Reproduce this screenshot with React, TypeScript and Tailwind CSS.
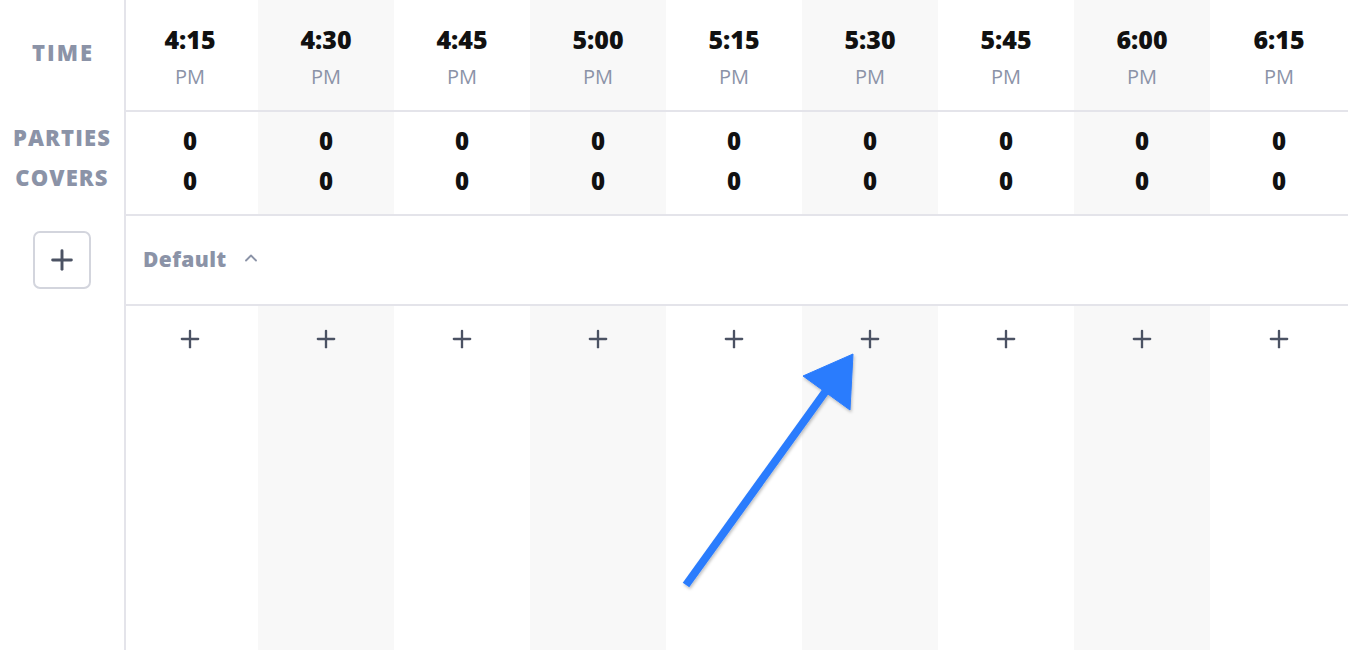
import { Plus, ChevronUp } from 'lucide-react'

const times = ['4:15', '4:30', '4:45', '5:00', '5:15', '5:30', '5:45', '6:00', '6:15']
const widths = ['w-[132px] pr-[4px]', 'w-[136px]', 'w-[136px]', 'w-[136px]', 'w-[136px]', 'w-[136px]', 'w-[136px]', 'w-[136px]', 'flex-1']

function Cols({ children, className = '' }: { children: (i: number) => React.ReactNode; className?: string }) {
  return (
    <div className={`flex ${className}`}>
      {times.map((_, i) => (
        <div key={i} className={`${widths[i]} shrink-0 ${i % 2 === 1 ? 'bg-[#f8f8f8]' : 'bg-white'} flex flex-col items-center`}>
          {children(i)}
        </div>
      ))}
    </div>
  )
}

export default function App() {
  return (
    <main className="relative w-[1348px] h-[650px] overflow-hidden bg-white flex" style={{ fontFamily: '"Open Sans", Lato, sans-serif' }}>
      <div className="w-[126px] shrink-0 border-r-2 border-[#e4e4ea] flex flex-col items-center">
        <div className="h-[112px] flex items-center pb-[8px] pl-[2px]">
          <span className="text-[22px] font-extrabold tracking-[0.09em] text-[#8b93a7]">TIME</span>
        </div>
        <div className="h-[104px] flex flex-col items-center pt-[11px] gap-[12px]">
          <span className="text-[22px] leading-[28px] font-extrabold tracking-[0.05em] text-[#8b93a7]">PARTIES</span>
          <span className="text-[22px] leading-[28px] font-extrabold tracking-[0.05em] text-[#8b93a7]">COVERS</span>
        </div>
        <button className="mt-[15px] w-[58px] h-[58px] rounded-[7px] border-2 border-[#d3d5dd] flex items-center justify-center text-[#4b5263]">
          <Plus size={32} strokeWidth={2.2} />
        </button>
      </div>

      <div className="flex-1 flex flex-col">
        <Cols className="h-[112px] border-b-2 border-[#e4e4ea]">
          {i => (
            <>
              <span className="mt-[22px] text-[25px] leading-[34px] font-extrabold text-[#111]">{times[i]}</span>
              <span className="mt-[8px] text-[20px] leading-[26px] text-[#8b93a7]">PM</span>
            </>
          )}
        </Cols>
        <Cols className="h-[104px] border-b-2 border-[#e4e4ea]">
          {() => (
            <>
              <span className="mt-[14px] text-[24px] leading-[30px] font-extrabold text-[#111]">0</span>
              <span className="mt-[10px] text-[24px] leading-[30px] font-extrabold text-[#111]">0</span>
            </>
          )}
        </Cols>
        <div className="h-[90px] border-b-2 border-[#e4e4ea] flex items-center pl-[17px] gap-[14px]">
          <span className="text-[21px] font-extrabold tracking-[0.02em] text-[#8b93a7]">Default</span>
          <ChevronUp size={20} strokeWidth={2.2} className="text-[#8b93a7] -mt-[4px]" />
        </div>
        <Cols className="flex-1">
          {() => <Plus size={28} strokeWidth={2} className="mt-[19px] text-[#4b5263]" />}
        </Cols>
      </div>

      <svg className="absolute left-0 top-0 pointer-events-none" width="1348" height="650" viewBox="0 0 1348 650">
        <defs>
          <filter id="sh" x="-20%" y="-20%" width="140%" height="140%">
            <feDropShadow dx="1" dy="2" stdDeviation="1.5" floodColor="#000" floodOpacity="0.25" />
          </filter>
        </defs>
        <g filter="url(#sh)" fill="#2b7cfd" stroke="#2b7cfd">
          <line x1="686" y1="585" x2="828" y2="388" strokeWidth="8" />
          <polygon points="853,354 803,376 850,410" strokeWidth="1" />
        </g>
      </svg>
    </main>
  )
}
